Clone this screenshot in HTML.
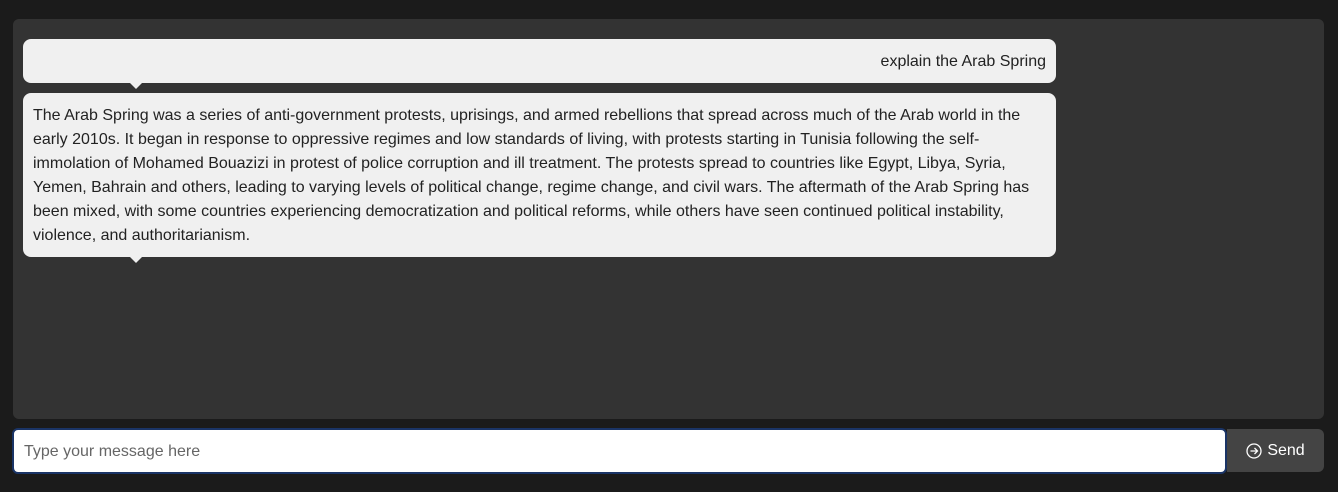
<!DOCTYPE html>
<html><head><style>
body{margin:0;background:#1b1b1b;width:1338px;height:492px;overflow:hidden;font-family:"Liberation Sans",Arial,sans-serif;}
.box{position:absolute;left:13px;top:19px;width:1311px;height:400px;background:#333;border-radius:6px;}
.b{position:absolute;left:10px;width:1033px;background:#f0f0f0;border-radius:8px;color:#222;font-size:16px;line-height:24px;padding:0 10px;box-sizing:border-box;}
.b:after{content:"";position:absolute;left:107px;bottom:-6px;border-left:6px solid transparent;border-right:6px solid transparent;border-top:6px solid #f0f0f0;}
.in{position:absolute;left:12px;top:428px;width:1215px;height:46px;box-sizing:border-box;background:#fff;border:2px solid #1a3466;border-radius:6px;font-size:16px;color:#666;padding:13px 10px 0;}
.send{position:absolute;left:1227px;top:429px;width:97px;height:43px;background:#444;border-radius:0 6px 6px 0;color:#fff;font-size:16px;display:flex;align-items:center;justify-content:center;gap:5px;padding-top:1px;box-sizing:border-box;}
</style></head><body>
<div class="box">
<div class="b" style="top:20px;height:44px;text-align:right;padding-top:11px;">explain the Arab Spring</div>
<div class="b" style="top:74px;height:164px;padding-top:11px;">The Arab Spring was a series of anti-government protests, uprisings, and armed rebellions that spread across much of the Arab world in the early 2010s. It began in response to oppressive regimes and low standards of living, with protests starting in Tunisia following the self-immolation of Mohamed Bouazizi in protest of police corruption and ill treatment. The protests spread to countries like Egypt, Libya, Syria, Yemen, Bahrain and others, leading to varying levels of political change, regime change, and civil wars. The aftermath of the Arab Spring has been mixed, with some countries experiencing democratization and political reforms, while others have seen continued political instability, violence, and authoritarianism.</div>
</div>
<div class="in">Type your message here</div>
<div class="send"><svg width="16" height="16" viewBox="0 0 16 16" fill="none" stroke="#fff" stroke-width="1.3"><circle cx="8" cy="8" r="7"/><path d="M4.5 8h7M8.5 5l3 3-3 3"/></svg>Send</div>
</body></html>
